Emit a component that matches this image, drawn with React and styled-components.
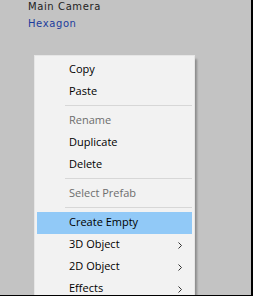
import React from "react";
import styled, { createGlobalStyle } from "styled-components";

const GlobalStyle = createGlobalStyle`
    html, body {
        margin: 0;
        padding: 0;
        background: #c3c3c3;
    }
`;

const Frame = styled.div`
    width: 253px;
    height: 296px;
    box-sizing: border-box;
    background: #c3c3c3;
    border-right: 2px solid #000;
    border-bottom: 1px solid #000;
    overflow: hidden;
`;

const Hierarchy = styled.div`
    padding: 0 0 0 28px;
    margin-top: -2px;
`;

const Node = styled.div`
    font-family: "DejaVu Sans", Verdana, sans-serif;
    font-size: 10px;
    letter-spacing: 0.6px;
    line-height: 17px;
    color: ${props => props.selected ? "#1c3b9c" : "#222"};
`;

const Menu = styled.div`
    margin: 24px 0 0 35px;
    width: 159px;
    box-sizing: border-box;
    padding: 3px 2px;
    background: #f2f2f2;
    box-shadow: 0 0 0 1px #e6e6e6, 3px 3px 2px rgba(0, 0, 0, 0.28);
`;

const Item = styled.div`
    display: flex;
    align-items: center;
    justify-content: space-between;
    height: 22px;
    box-sizing: border-box;
    padding: 0 10px 3px 32px;
    font-family: "Open Sans", "Noto Sans", sans-serif;
    font-size: 11px;
    color: ${props => props.disabled ? "#6d6d6d" : "#000"};
    background: ${props => props.active ? "#91c9f7" : "transparent"};
`;

const Separator = styled.div`
    height: 1px;
    margin: 2px 0 4px 28px;
    background: #d7d7d7;
`;

const Chevron = () => (
    <svg width="4" height="7" viewBox="0 0 4 7" style={{ marginTop: 3 }}>
        <polyline points="0.5,0.5 3.5,3.5 0.5,6.5" fill="none" stroke="#333" strokeWidth="1" />
    </svg>
);

const items = [
    { label: "Copy" },
    { label: "Paste" },
    { sep: true },
    { label: "Rename", disabled: true },
    { label: "Duplicate" },
    { label: "Delete" },
    { sep: true },
    { label: "Select Prefab", disabled: true },
    { sep: true },
    { label: "Create Empty", active: true },
    { label: "3D Object", sub: true },
    { label: "2D Object", sub: true },
    { label: "Effects", sub: true },
];

const App = () => {
    return (
        <Frame>
            <GlobalStyle />
            <Hierarchy>
                <Node>Main Camera</Node>
                <Node selected>Hexagon</Node>
            </Hierarchy>
            <Menu>
                {items.map((it, i) =>
                    it.sep ? (
                        <Separator key={i} />
                    ) : (
                        <Item key={i} disabled={it.disabled} active={it.active}>
                            <span>{it.label}</span>
                            {it.sub && <Chevron />}
                        </Item>
                    )
                )}
            </Menu>
        </Frame>
    );
};

export default App;
